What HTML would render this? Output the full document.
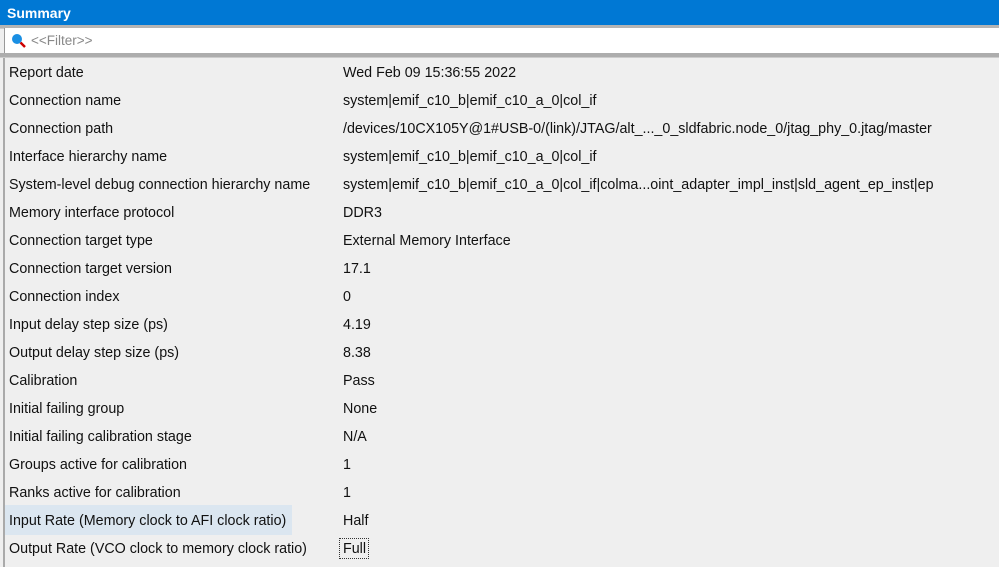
<!DOCTYPE html>
<html><head><style>
body{margin:0;width:999px;height:567px;overflow:hidden;background:#efefef;font-family:"Liberation Sans",sans-serif;font-size:14.3px;color:#111;position:relative}
.hd{position:absolute;left:0;top:0;width:999px;height:25px;background:#0078d4;color:#fff;font-weight:bold;font-size:14px;line-height:26px;padding-left:7px;box-sizing:border-box}
.l1{position:absolute;left:0;top:25px;width:999px;height:3px;background:#b4b4b4;border-bottom:1px solid #ccc}
.f{position:absolute;left:4px;top:28px;width:995px;height:25px;background:#fff;border-left:1px solid #999}
.f span{position:absolute;left:26px;top:5px;color:#888;font-size:13.5px}
.l2{position:absolute;left:0;top:53px;width:999px;height:4px;background:#adadad;border-bottom:1px solid #ccc}
.lb{position:absolute;left:3px;top:58px;width:2px;height:509px;background:#aaa}
.r{position:absolute;height:20px;line-height:20px;white-space:nowrap}
.v{left:343px}
.hl{position:absolute;left:5px;top:505px;width:287px;height:30px;background:#dbe6f0}
.fx{position:absolute;left:339px;top:538px;width:30px;height:21px;border:1px dotted #333;box-sizing:border-box}
</style></head><body>
<div class="hd">Summary</div><div class="l1"></div>
<div class="f"><svg style="position:absolute;left:6px;top:5px" width="16" height="16"><circle cx="6" cy="6" r="5" fill="#1a8fe3"/><line x1="9.5" y1="9.5" x2="14" y2="14" stroke="#c00" stroke-width="2.5"/></svg><span>&lt;&lt;Filter&gt;&gt;</span></div>
<div class="l2"></div><div class="lb"></div>
<div class="hl"></div><div class="fx"></div>
<div class="r" style="left:9px;top:63px">Report date</div><div class="r v" style="top:63px">Wed Feb 09 15:36:55 2022</div>
<div class="r" style="left:9px;top:91px">Connection name</div><div class="r v" style="top:91px">system|emif_c10_b|emif_c10_a_0|col_if</div>
<div class="r" style="left:9px;top:119px">Connection path</div><div class="r v" style="top:119px">/devices/10CX105Y@1#USB-0/(link)/JTAG/alt_..._0_sldfabric.node_0/jtag_phy_0.jtag/master</div>
<div class="r" style="left:9px;top:147px">Interface hierarchy name</div><div class="r v" style="top:147px">system|emif_c10_b|emif_c10_a_0|col_if</div>
<div class="r" style="left:9px;top:175px">System-level debug connection hierarchy name</div><div class="r v" style="top:175px">system|emif_c10_b|emif_c10_a_0|col_if|colma...oint_adapter_impl_inst|sld_agent_ep_inst|ep</div>
<div class="r" style="left:9px;top:203px">Memory interface protocol</div><div class="r v" style="top:203px">DDR3</div>
<div class="r" style="left:9px;top:231px">Connection target type</div><div class="r v" style="top:231px">External Memory Interface</div>
<div class="r" style="left:9px;top:259px">Connection target version</div><div class="r v" style="top:259px">17.1</div>
<div class="r" style="left:9px;top:287px">Connection index</div><div class="r v" style="top:287px">0</div>
<div class="r" style="left:9px;top:315px">Input delay step size (ps)</div><div class="r v" style="top:315px">4.19</div>
<div class="r" style="left:9px;top:343px">Output delay step size (ps)</div><div class="r v" style="top:343px">8.38</div>
<div class="r" style="left:9px;top:371px">Calibration</div><div class="r v" style="top:371px">Pass</div>
<div class="r" style="left:9px;top:399px">Initial failing group</div><div class="r v" style="top:399px">None</div>
<div class="r" style="left:9px;top:427px">Initial failing calibration stage</div><div class="r v" style="top:427px">N/A</div>
<div class="r" style="left:9px;top:455px">Groups active for calibration</div><div class="r v" style="top:455px">1</div>
<div class="r" style="left:9px;top:483px">Ranks active for calibration</div><div class="r v" style="top:483px">1</div>
<div class="r" style="left:9px;top:511px">Input Rate (Memory clock to AFI clock ratio)</div><div class="r v" style="top:511px">Half</div>
<div class="r" style="left:9px;top:539px">Output Rate (VCO clock to memory clock ratio)</div><div class="r v" style="top:539px">Full</div>
</body></html>
